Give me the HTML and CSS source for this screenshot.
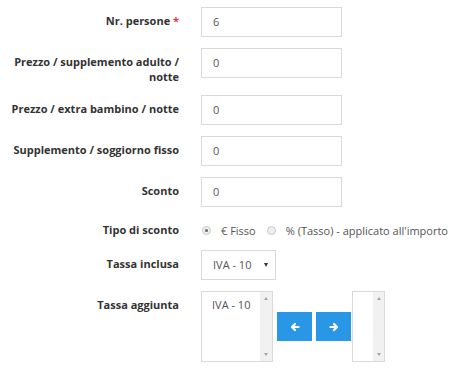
FILE: index.html
```html
<!DOCTYPE html>
<html lang="it">
<head>
<meta charset="utf-8">
<title>Tariffe</title>
<link rel="stylesheet" href="styles.css">
</head>
<body>
<form class="form">
  <div class="row">
    <label class="lbl">Nr. persone <span class="req">*</span></label>
    <div class="ctl"><div class="input">6</div></div>
  </div>
  <div class="row">
    <label class="lbl">Prezzo / supplemento adulto / notte</label>
    <div class="ctl"><div class="input">0</div></div>
  </div>
  <div class="row">
    <label class="lbl">Prezzo / extra bambino / notte</label>
    <div class="ctl"><div class="input">0</div></div>
  </div>
  <div class="row">
    <label class="lbl">Supplemento / soggiorno fisso</label>
    <div class="ctl"><div class="input">0</div></div>
  </div>
  <div class="row">
    <label class="lbl">Sconto</label>
    <div class="ctl"><div class="input">0</div></div>
  </div>
  <div class="row row-radio">
    <label class="lbl lbl-radio">Tipo di sconto</label>
    <div class="ctl radios">
      <span class="radio checked"></span><span class="rtext">€ Fisso</span>
      <span class="radio"></span><span class="rtext">% (Tasso) - applicato all'importo</span>
    </div>
  </div>
  <div class="row">
    <label class="lbl">Tassa inclusa</label>
    <div class="ctl"><div class="select">IVA - 10<span class="caret"></span></div></div>
  </div>
  <div class="row">
    <label class="lbl">Tassa aggiunta</label>
    <div class="ctl dual">
      <div class="listbox lb1">
        <div class="options"><div class="opt">IVA - 10</div></div>
        <div class="sbar"><span class="up"></span><span class="down"></span></div>
      </div>
      <div class="btns">
        <span class="btn"><svg width="10" height="10" viewBox="0 0 10 10"><path d="M8.6 5H2.4M5 2L2 5 5 8" fill="none" stroke="#fff" stroke-width="2.2" stroke-linecap="round" stroke-linejoin="round"/></svg></span>
        <span class="btn"><svg width="10" height="10" viewBox="0 0 10 10"><path d="M1.4 5h6.2M5 2L8 5 5 8" fill="none" stroke="#fff" stroke-width="2.2" stroke-linecap="round" stroke-linejoin="round"/></svg></span>
      </div>
      <div class="listbox lb2">
        <div class="options"></div>
        <div class="sbar"><span class="up"></span><span class="down"></span></div>
      </div>
    </div>
  </div>
</form>
</body>
</html>
```
FILE: styles.css
```css
html, body { margin: 0; padding: 0; background: #fff; }
body {
  font-family: "Open Sans", "Noto Sans", sans-serif;
  font-size: 11px;
  color: #333;
}
.form { padding-top: 7px; }
.row {
  display: grid;
  grid-template-columns: 179px 1fr;
  column-gap: 22px;
  margin-bottom: 11px;
}
.lbl {
  text-align: right;
  font-weight: 700;
  line-height: 15px;
  padding-top: 6px;
  color: #333;
}
.req { color: #e7353b; }
.input {
  width: 141px;
  height: 30px;
  box-sizing: border-box;
  border: 1px solid #d9d9d9;
  padding: 6px 11px;
  line-height: 16px;
  color: #555;
}
.row-radio { margin-top: 1px; margin-bottom: 8px; }
.lbl-radio { padding-top: 4px; }
.radios {
  display: flex;
  align-items: center;
  height: 24px;
  color: #555;
  white-space: nowrap;
}
.radio {
  width: 9px;
  height: 9px;
  border-radius: 50%;
  border: 1px solid #c8c8c8;
  background: #eee;
  box-sizing: border-box;
  margin-left: 1px;
  margin-right: 10px;
  position: relative;
  flex: none;
}
.radio.checked::after {
  content: "";
  position: absolute;
  left: 2px; top: 2px;
  width: 3px; height: 3px;
  border-radius: 50%;
  background: #666;
}
.rtext { margin-right: 10px; }
.select {
  width: 75px;
  height: 30px;
  box-sizing: border-box;
  border: 1px solid #d9d9d9;
  padding: 6px 11px;
  line-height: 16px;
  color: #555;
  display: flex;
  align-items: center;
  justify-content: space-between;
  white-space: nowrap;
}
.caret {
  width: 0; height: 0;
  border-left: 2.5px solid transparent;
  border-right: 2.5px solid transparent;
  border-top: 4px solid #333;
  margin-right: -4px;
}
.dual { display: flex; align-items: center; }
.listbox {
  height: 71px;
  box-sizing: border-box;
  border: 1px solid #d9d9d9;
  display: flex;
  flex: none;
}
.lb1 { width: 72px; }
.lb2 { width: 33px; }
.options { flex: 1; padding: 5px 10px; line-height: 16px; color: #555; white-space: nowrap; }
.sbar {
  width: 12px;
  background: #f1f1f1;
  display: flex;
  flex-direction: column;
  justify-content: space-between;
  align-items: center;
  padding: 5px 0;
}
.up, .down { width: 0; height: 0; border-left: 2.5px solid transparent; border-right: 2.5px solid transparent; }
.up { border-bottom: 3px solid #a3a3a3; }
.down { border-top: 3px solid #a3a3a3; }
.btns { display: flex; gap: 4px; margin: 0 1px 0 4px; }
.btn {
  width: 35px;
  height: 29px;
  background: #2a97e6;
  display: flex;
  align-items: center;
  justify-content: center;
}
```
